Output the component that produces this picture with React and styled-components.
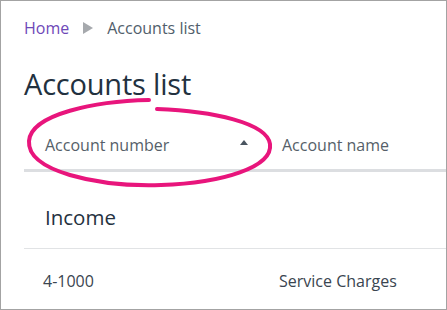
import React from 'react'
import styled, { createGlobalStyle } from 'styled-components'

const Global = createGlobalStyle`
body{margin:0;background:#fff;font-family:"Open Sans","Noto Sans",sans-serif;}
`
const Frame = styled.div`
position:relative;
width:447px;
height:310px;
box-sizing:border-box;
border:1px solid #a3a3a3;
overflow:hidden;
padding:0 0 0 23px;
`
const Crumbs = styled.div`
display:flex;
align-items:center;
height:28px;
margin-top:13px;
font-size:16px;
color:#515e6b;
`
const CrumbLink = styled.span`
color:#6e48b8;
`
const Arrow = styled.span`
width:0;height:0;
border-top:6px solid transparent;
border-bottom:6px solid transparent;
border-left:10px solid #a6a9ad;
margin:0 14px 0 14px;
`
const Title = styled.h1`
margin:22px 0 0;
font-size:29px;
font-weight:400;
color:#22313f;
line-height:40px;
letter-spacing:-0.2px;
`
const Row = styled.div`
display:grid;
grid-template-columns:237px 1fr;
align-items:start;
box-sizing:border-box;
height:${p => p.h}px;
padding-top:${p => p.pt}px;
border-bottom:${p => p.line || 'none'};
`
const HeadRow = styled(Row)`
margin-top:12px;
`
const HeadCell = styled.div`
display:flex;
align-items:center;
justify-content:space-between;
padding:0 13px 0 21px;
font-size:16px;
line-height:22px;
color:#565f69;
`
const Sort = styled.span`
width:0;height:0;
border-left:4px solid transparent;
border-right:4px solid transparent;
border-bottom:5px solid #4a5560;
margin-bottom:6px;
`
const Group = styled.div`
padding-left:21px;
font-size:20.5px;
line-height:28px;
color:#25323f;
`
const Cell = styled.div`
padding-left:${p => p.pad}px;
font-size:16px;
line-height:20px;
color:#3a4550;
`
const Circle = styled.svg`
position:absolute;
left:0;top:0;
pointer-events:none;
`

export default function App(){
  return(
    <Frame>
      <Global/>
      <Crumbs>
        <CrumbLink>Home</CrumbLink>
        <Arrow/>
        <span>Accounts list</span>
      </Crumbs>
      <Title>Accounts list</Title>
      <HeadRow h={56} pt={18} line="3px solid #dcdee1">
        <HeadCell>Account number<Sort/></HeadCell>
        <HeadCell>Account name</HeadCell>
      </HeadRow>
      <Row h={77} pt={31} line="1px solid #e1e3e5">
        <Group>Income</Group>
      </Row>
      <Row h={64} pt={22}>
        <Cell pad={19}>4-1000</Cell>
        <Cell pad={18}>Service Charges</Cell>
      </Row>
      <Circle width="447" height="310" viewBox="0 0 447 310">
        <path d="M148 99 C95 100 30 113 28 140 C26 170 95 186 160 184 C222 182 272 166 269 143 C266 122 212 110 156 108"
          fill="none" stroke="#e8157c" strokeWidth="4" strokeLinecap="round"/>
      </Circle>
    </Frame>
  )
}
